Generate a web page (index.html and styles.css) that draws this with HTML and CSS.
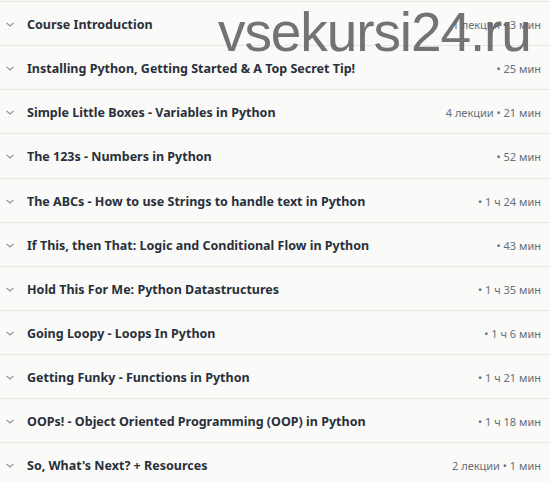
FILE: index.html
```html
<!DOCTYPE html>
<html lang="ru">
<head>
<meta charset="utf-8">
<title>Course content</title>
<link rel="stylesheet" href="styles.css">
</head>
<body>
<div class="curriculum">
  <div class="section"><svg class="chev" viewBox="0 0 8 5"><path d="M0.5 0.8 L4 4 L7.5 0.8"/></svg><span class="title">Course Introduction</span><span class="meta">1 лекция • 3 мин</span></div>
  <div class="section"><svg class="chev" viewBox="0 0 8 5"><path d="M0.5 0.8 L4 4 L7.5 0.8"/></svg><span class="title">Installing Python, Getting Started &amp; A Top Secret Tip!</span><span class="meta">• 25 мин</span></div>
  <div class="section"><svg class="chev" viewBox="0 0 8 5"><path d="M0.5 0.8 L4 4 L7.5 0.8"/></svg><span class="title">Simple Little Boxes - Variables in Python</span><span class="meta">4 лекции • 21 мин</span></div>
  <div class="section"><svg class="chev" viewBox="0 0 8 5"><path d="M0.5 0.8 L4 4 L7.5 0.8"/></svg><span class="title">The 123s - Numbers in Python</span><span class="meta">• 52 мин</span></div>
  <div class="section"><svg class="chev" viewBox="0 0 8 5"><path d="M0.5 0.8 L4 4 L7.5 0.8"/></svg><span class="title">The ABCs - How to use Strings to handle text in Python</span><span class="meta">• 1 ч 24 мин</span></div>
  <div class="section"><svg class="chev" viewBox="0 0 8 5"><path d="M0.5 0.8 L4 4 L7.5 0.8"/></svg><span class="title">If This, then That: Logic and Conditional Flow in Python</span><span class="meta">• 43 мин</span></div>
  <div class="section"><svg class="chev" viewBox="0 0 8 5"><path d="M0.5 0.8 L4 4 L7.5 0.8"/></svg><span class="title">Hold This For Me: Python Datastructures</span><span class="meta">• 1 ч 35 мин</span></div>
  <div class="section"><svg class="chev" viewBox="0 0 8 5"><path d="M0.5 0.8 L4 4 L7.5 0.8"/></svg><span class="title">Going Loopy - Loops In Python</span><span class="meta">• 1 ч 6 мин</span></div>
  <div class="section"><svg class="chev" viewBox="0 0 8 5"><path d="M0.5 0.8 L4 4 L7.5 0.8"/></svg><span class="title">Getting Funky - Functions in Python</span><span class="meta">• 1 ч 21 мин</span></div>
  <div class="section"><svg class="chev" viewBox="0 0 8 5"><path d="M0.5 0.8 L4 4 L7.5 0.8"/></svg><span class="title">OOPs! - Object Oriented Programming (OOP) in Python</span><span class="meta">• 1 ч 18 мин</span></div>
  <div class="section"><svg class="chev" viewBox="0 0 8 5"><path d="M0.5 0.8 L4 4 L7.5 0.8"/></svg><span class="title">So, What's Next? + Resources</span><span class="meta">2 лекции • 1 мин</span></div>
</div>
<div class="watermark">vsekursi24.ru</div>
</body>
</html>
```
FILE: styles.css
```css
html, body {
  margin: 0;
  padding: 0;
  background: #fafaf8;
}
body {
  width: 550px;
  height: 482px;
  overflow: hidden;
  position: relative;
  font-family: "Noto Sans", "Open Sans", sans-serif;
}
.curriculum {
  padding-top: 1px;
}
.section {
  display: flex;
  align-items: center;
  box-sizing: border-box;
  height: 44.15px;
  padding: 2px 9px 0 6px;
  border-top: 1px solid #e6e6e2;
}
.chev {
  width: 8px;
  height: 5px;
  flex: none;
  margin-right: 13px;
  fill: none;
  stroke: #8a8f96;
  stroke-width: 1.1;
}
.title {
  flex: 1;
  font-weight: 700;
  font-size: 12.5px;
  color: #29303b;
  white-space: nowrap;
}
.meta {
  font-size: 11px;
  color: #686f7a;
  white-space: nowrap;
}
.watermark {
  position: absolute;
  left: 218px;
  top: 0;
  font-family: "Liberation Sans", Arial, sans-serif;
  font-size: 55px;
  line-height: 64px;
  letter-spacing: -1.1px;
  color: rgba(100, 100, 100, 0.9);
  pointer-events: none;
}
```
